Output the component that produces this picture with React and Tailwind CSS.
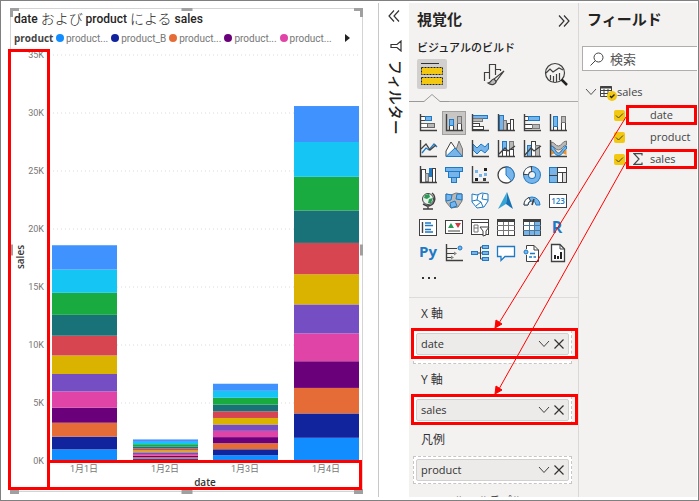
import React from "react";

const SERIES_COLORS = [
  "#118dff", "#12239e", "#e66c37", "#6b007b", "#e044a7", "#744ec2",
  "#d9b300", "#d64550", "#197278", "#1aab40", "#15c6f4", "#4092ff",
];

// Sales per product, in thousands: first product and the step to each next one.
const DAYS = [
  { label: "1月1日", first: 1.0, step: 0.1 },
  { label: "1月2日", first: 0.1, step: 0.01 },
  { label: "1月3日", first: 0.5, step: 0.01 },
  { label: "1月4日", first: 2.0, step: 0.1 },
];

const LEGEND = [
  { name: "product...", color: "#118dff" },
  { name: "product_B", color: "#12239e" },
  { name: "product...", color: "#e66c37" },
  { name: "product...", color: "#6b007b" },
  { name: "product...", color: "#e044a7" },
];

const UI = "font-['Open_Sans','Noto_Sans_CJK_JP',sans-serif]";
const CHART = "font-['Roboto','Noto_Sans_CJK_JP',sans-serif]";
const JP = "font-['Noto_Sans_CJK_JP',sans-serif]";

const D = "#404040";
const B = "#1e7ac4";
const L = "#76b4ea";
const G = "#b8b8b8";

const Axis = () => <path d="M1.5 0V16.5H18" fill="none" stroke={D} strokeWidth="1.4" />;

function Box({ x, y, w, h, f = "#fff", s = D }) {
  return <rect x={x} y={y} width={w} height={h} fill={f} stroke={s} />;
}

const VISUALS = [
  ["積み上げ横棒グラフ", <><Box x={1.5} y={9.5} w={14} h={4} f={G} s="#666" /><Box x={1.5} y={9.5} w={7} h={4} f="#fff" s="#666" /><Box x={1.5} y={2.5} w={5} h={4} /><Box x={6.5} y={2.5} w={6} h={4} f={L} s={B} /><Axis /></>],
  ["積み上げ縦棒グラフ", <><Box x={4.5} y={11.5} w={4} h={5} /><Box x={4.5} y={5.5} w={4} h={6} f={L} s={B} /><Box x={12.5} y={9.5} w={4} h={7} /><Box x={12.5} y={2.5} w={4} h={7} f={G} s="#777" /><Axis /></>],
  ["集合横棒グラフ", <><Box x={1.5} y={1.5} w={15} h={3} f={L} s={B} /><Box x={1.5} y={4.5} w={10} h={3} f={G} s="#777" /><Box x={1.5} y={9.5} w={7} h={3} /><Box x={1.5} y={12.5} w={11} h={3} /><Axis /></>],
  ["集合縦棒グラフ", <><Box x={2.5} y={1.5} w={4} h={15} f={L} s={B} /><Box x={6.5} y={6.5} w={3} h={10} f={G} s="#777" /><Box x={10.5} y={9.5} w={3} h={7} /><Box x={13.5} y={5.5} w={3} h={11} /><Axis /></>],
  ["100% 積み上げ横棒グラフ", <><Box x={1.5} y={2.5} w={4} h={4} /><Box x={5.5} y={2.5} w={11} h={4} f={L} s={B} /><Box x={1.5} y={10.5} w={8} h={4} /><Box x={9.5} y={10.5} w={7} h={4} f={G} s="#777" /><Axis /></>],
  ["100% 積み上げ縦棒グラフ", <><Box x={4.5} y={12.5} w={4} h={4} /><Box x={4.5} y={2.5} w={4} h={10} f={L} s={B} /><Box x={12.5} y={8.5} w={4} h={8} /><Box x={12.5} y={2.5} w={4} h={6} f={G} s="#777" /><Axis /></>],

  ["折れ線グラフ", <><path d="M3 13L7 8L10 10L15 4L18 7" fill="none" stroke={B} strokeWidth="1.3" /><path d="M2 9L7 4L11 10L17 5" fill="none" stroke={D} strokeWidth="1.3" /><Axis /></>],
  ["面グラフ", <><path d="M9 16L14 1L17.5 9V16.5Z" fill={G} stroke="#777" /><path d="M1 11L6 2L13 12L9 16.5H1Z" fill="#fff" stroke={D} /><path d="M1 16.5L10 8L17.5 16.5Z" fill={L} stroke={B} /></>],
  ["積み上げ面グラフ", <><path d="M2 4L6 8L10 4L14 7L17.5 3V9L14 13L10 10L6 14L2 10Z" fill={L} stroke={B} /><Axis /></>],
  ["折れ線グラフおよび積み上げ縦棒グラフ", <><Box x={5.5} y={1.5} w={4} h={10} f={L} s={B} /><Box x={5.5} y={10.5} w={4} h={6} /><Box x={12.5} y={1.5} w={4} h={9} f={G} s="#777" /><Box x={12.5} y={9.5} w={4} h={7} /><path d="M2 14L8 8L11 11L18 6" fill="none" stroke={D} strokeWidth="1.3" /><Axis /></>],
  ["折れ線グラフおよび集合縦棒グラフ", <><Box x={4.5} y={5.5} w={4} h={11} f={L} s={B} /><Box x={8.5} y={1.5} w={4} h={15} /><Box x={12.5} y={5.5} w={4} h={11} f={G} s="#777" /><path d="M2 15L8 8L11 11L18 6" fill="none" stroke={D} strokeWidth="1.3" /><Axis /></>],
  ["リボン グラフ", <><path d="M2 10L6 9L9.500 13L13 9L17.500 10V15L13 13L9.500 16L6 13L2 15Z" fill="#f0922b" /><path d="M2 2C6 2 6 6 9.500 6S13 1 17.500 1V5C14 5 13 10 9.500 10S6 6 2 6Z" fill={G} stroke="#777" /><path d="M2 6C6 6 6 13 9.500 13S13 7 17.500 6V9C14 10 14 15.500 9.500 15.500S5 10 2 9.500Z" fill={L} stroke={B} /><Axis /></>],

  ["ウォーターフォール図", <><Box x={2.5} y={3.5} w={4} h={13} /><Box x={6.5} y={7.5} w={3} h={8} f={G} s="#777" /><Box x={10.5} y={2.5} w={2} h={8} f={B} s={B} /><Box x={13.5} y={2.5} w={3} h={14} f="#fff" /><Axis /></>],
  ["じょうごグラフ", <><Box x={0.5} y={1.5} w={17} h={4} f={L} s={B} /><Box x={3.5} y={5.5} w={11} h={6} f={L} s={B} /><Box x={6.5} y={11.5} w={5} h={5} f={L} s={B} /></>],
  ["散布図", <><rect x="4" y="4" width="3" height="3" fill={L} /><rect x="8" y="8" width="3" height="3" fill={L} /><rect x="13" y="7" width="3" height="3" fill={L} /><rect x="13" y="2" width="3" height="3" fill="#222" /><rect x="4" y="12" width="3" height="3" fill="#222" /><rect x="12" y="12" width="3" height="3" fill={D} /><Axis /></>],
  ["円グラフ", <><circle cx="9" cy="9" r="8" fill="#fff" stroke={D} strokeWidth="1.3" /><path d="M9 1A8 8 0 0 1 14.500 15L9 9Z" fill={L} stroke={B} /></>],
  ["ドーナツ グラフ", <><circle cx="9" cy="9" r="6" fill="none" stroke={B} strokeWidth="6" /><circle cx="9" cy="9" r="6" fill="none" stroke={L} strokeWidth="4" /><path d="M3 9A6 6 0 0 1 9 3" fill="none" stroke={D} strokeWidth="6" /><path d="M3 8A6 6 0 0 1 8 3" fill="none" stroke="#fff" strokeWidth="4" /></>],
  ["ツリーマップ", <><Box x={0.5} y={1.5} w={8} h={15} f={L} s={B} /><Box x={8.5} y={1.5} w={9} h={5} /><Box x={8.5} y={6.5} w={5} h={10} /><Box x={13.5} y={6.5} w={4} h={10} f="#ddd" /><path d="M0 9.500H8M8.500 1V17" stroke={D} /></>],

  ["マップ", <><circle cx="9" cy="7" r="5.500" fill="#e8f4ec" stroke={D} /><path d="M6 3L10 2L11 5L8 7L5 6ZM10 7L14 6L12 11L9 11Z" fill="#2b9a55" /><path d="M13 1C18 5 16 14 8 14L4 12M9 14V17M4 17H14" fill="none" stroke={D} strokeWidth="1.400" /></>],
  ["塗り分け地図", <><path d="M1 2L6 3L11 1L17 2V9L13 15L6 16L1 10Z" fill={G} stroke="#777" /><path d="M1 2L7 3L6 8L1 9ZM12 2L17 2V8L11 7ZM5 11L10 9L12 14L6 16Z" fill={L} stroke={B} /></>],
  ["図形マップ", <><path d="M1 2L6 3L11 1L17 2V9L13 15L6 16L1 10Z" fill="#fff" stroke={B} /><path d="M7 3L6 8L1 9M12 2L11 7L17 8M6 8L10 10L12 15M10 10L5 14" fill="none" stroke={B} /></>],
  ["Azure マップ", <><path d="M10 0L16 17L9 12Z" fill="#1471b5" /><path d="M10 0L1 17L9 12Z" fill="#35a5d5" /></>],
  ["ゲージ", <><path d="M1 13A8 8 0 0 1 17 13H13A4 4 0 0 0 5 13Z" fill={L} stroke={B} /><path d="M1 13A8 8 0 0 1 6 5.500L7.500 9A4 4 0 0 0 5 13Z" fill="#fff" stroke={D} /><path d="M9 13L11 7" stroke={D} strokeWidth="1.600" /></>],
  ["カード", <><Box x={0.5} y={2.5} w={17} h={13} /><text x="9" y="12" textAnchor="middle" fontSize="8" fontWeight="600" fill={B}>123</text></>],

  ["複数の行カード", <><Box x={0.5} y={1.5} w={17} h={16} /><path d="M3.500 4V15" stroke={D} strokeWidth="1.400" /><path d="M6 5H12M6 7.500H14M6 11.500H12M6 14H14" stroke={B} strokeWidth="1.400" /></>],
  ["KPI", <><Box x={0.5} y={2.5} w={17} h={13} /><path d="M3 10L6 5L9 10Z" fill="#2b9a55" /><path d="M10 5H16L13 10Z" fill="#d8373f" /><path d="M3 13H15" stroke={D} /></>],
  ["スライサー", <><Box x={0.5} y={1.5} w={17} h={15} /><path d="M0 4.500H18" stroke={D} /><path d="M3 7H7V14H3ZM3 10H7" fill="none" stroke="#777" /><path d="M9 9H18L15 13V17L12 18V13Z" fill="#fff" stroke={D} /></>],
  ["テーブル", <><Box x={0.5} y={1.5} w={17} h={16} /><path d="M1 3H17" stroke={D} strokeWidth="2" /><path d="M0 7.500H18M0 12.500H18M6.500 4V17M11.500 4V17" stroke="#777" /></>],
  ["マトリックス", <><Box x={0.5} y={1.5} w={17} h={16} /><path d="M12 4H17V17H1V13H12Z" fill={L} /><path d="M0 7.500H18M0 12.500H18M6.500 4V17M11.500 4V17" stroke="#4f7799" /><path d="M1 3H17" stroke={D} strokeWidth="2" /></>],
  ["R スクリプト ビジュアル", <text x="8" y="15" textAnchor="middle" fontSize="16" fontWeight="700" fill={B}>R</text>],

  ["Python ビジュアル", <text x="9" y="13" textAnchor="middle" fontSize="15" fontWeight="700" fill={B}>Py</text>],
  ["主要なインフルエンサー", <><path d="M2 4.500H12M2 9.500H9M2 13.500H6" stroke={D} /><circle cx="15" cy="4" r="2" fill={L} stroke={B} /><path d="M9 7.500L12 9.500L9 11.500ZM6 11.500L9 13.500L6 15.500Z" fill="#888" /><Axis /></>],
  ["分解ツリー", <><Box x={0.5} y={7.5} w={6} h={3} f={L} s={B} /><path d="M7 9H11M9.500 3V15H12M9.500 3H12" fill="none" stroke={D} /><Box x={11.5} y={1.5} w={6} h={3} f={L} s={B} /><Box x={11.5} y={7.5} w={6} h={3} f={L} s={B} /><Box x={11.5} y={13.5} w={6} h={3} f={L} s={B} /></>],
  ["Q&A", <path d="M0.500 2.500H17.500V12.500H8L4 16.500V12.500H0.500Z" fill="#fff" stroke={B} strokeWidth="1.300" />],
  ["スマート説明", <><path d="M3.500 5V1.500H11L15.500 6V17.500H3.500V11" fill="#fff" stroke={D} /><path d="M11 1.500V6H15.500" fill="none" stroke={D} /><circle cx="3" cy="8" r="2" fill={L} stroke={B} /><path d="M7 9.500H12M6 13H9M10.500 13H13" stroke={B} strokeWidth="1.300" /></>],
  ["ページ分割されたレポート", <><path d="M2.500 0.500H11L15.500 5V17.500H2.500Z" fill="#fff" stroke={D} strokeWidth="1.300" /><path d="M11 1V5H15" fill="none" stroke={D} /><path d="M6 15V11M9 15V12M12 15V8" stroke="#222" strokeWidth="2" /></>],
];

function Chart() {
  const zero = 414;
  const perK = 406 / 35;
  return (
    <svg viewBox="0 0 351 444" className={`block w-full ${CHART}`} role="img" aria-label="date および product による sales">
      {[35, 30, 25, 20, 15, 10, 5, 0].map((k) => {
        const y = Math.round(zero - k * perK);
        return (
          <g key={k}>
            {k > 0 && <line x1="42" x2="348" y1={y} y2={y} stroke="#dcdcdc" strokeDasharray="1 3" />}
            <text x="33" y={y + 3} textAnchor="end" fontSize="9" fill="#777">{k}K</text>
          </g>
        );
      })}
      {DAYS.map((day, i) => {
        const x = 41 + Math.round(i * 80.6);
        let total = 0;
        return (
          <g key={day.label}>
            {SERIES_COLORS.map((color, j) => {
              const v = day.first + day.step * j;
              total += v;
              return <rect key={color} x={x} y={zero - total * perK} width="65" height={v * perK} fill={color} />;
            })}
            <text x={x + 32} y="425" textAnchor="middle" fontSize="9" fill="#777">{day.label}</text>
          </g>
        );
      })}
      <g className={UI} fontSize="10" fontWeight="600" fill="#333" textAnchor="middle">
        <text x="194" y="439">date</text>
        <text transform="translate(13 210) rotate(-90)">sales</text>
      </g>
    </svg>
  );
}

const Handle = ({ className }) => <span className={`absolute bg-[#a0a0a0] ${className}`} />;

function ReportCanvas() {
  return (
    <main className="min-w-0 flex-1 border-r border-[#c8c8c8] pt-[5px] pr-[15px] pl-[9px]">
      <section className="relative border border-[#d4d4d4]">
        <Handle className="-top-px -left-px h-[3px] w-[9px]" />
        <Handle className="-top-px -left-px h-[9px] w-[3px]" />
        <Handle className="-top-px left-1/2 h-[3px] w-[11px] -translate-x-1/2" />
        <Handle className="-top-px -right-px h-[3px] w-[9px]" />
        <Handle className="-top-px -right-px h-[9px] w-[3px]" />
        <Handle className="top-1/2 -left-px h-[11px] w-[3px] -translate-y-1/2" />
        <Handle className="top-1/2 -right-px h-[11px] w-[3px] -translate-y-1/2" />
        <Handle className="-bottom-[3px] -left-px h-[5px] w-[9px]" />
        <Handle className="-bottom-[3px] left-1/2 h-[5px] w-[11px] -translate-x-1/2" />
        <Handle className="-right-px -bottom-[3px] h-[5px] w-[9px]" />
        <h1 className={`flex h-5 items-center pl-[3px] text-xs font-medium whitespace-nowrap text-[#252423] ${CHART}`}>
          date&nbsp;<span className="text-sm font-light">および</span>&nbsp;product&nbsp;<span className="text-sm font-light">による</span>&nbsp;sales
        </h1>
        <div className={`flex h-[18px] items-center pl-[3px] text-[10px] text-[#777] ${CHART}`}>
          <span className={`w-[42px] font-bold text-[#444] ${UI}`}>product</span>
          <ul className="flex flex-1 gap-[3px]">
            {LEGEND.map((item, i) => (
              <li key={i} className="flex items-center gap-[2px] whitespace-nowrap">
                <svg viewBox="0 0 8 8" className="size-2 shrink-0"><circle cx="4" cy="4" r="4" fill={item.color} /></svg>
                {item.name}
              </li>
            ))}
          </ul>
          <button type="button" aria-label="次へ" className="mr-3">
            <svg viewBox="0 0 5 8" className="h-2 w-[5px]"><path d="M0 0L5 4L0 8Z" fill="#222" /></svg>
          </button>
        </div>
        <div className="relative">
          <Chart />
          <div className="absolute top-[2px] bottom-px -left-[3px] w-[42px] border-[3px] border-[#fe0000]" />
          <div className="absolute right-0 bottom-px left-9 h-[30px] border-[3px] border-[#fe0000]" />
        </div>
      </section>
    </main>
  );
}

function Chevrons({ flip }) {
  return (
    <svg viewBox="0 0 12 12" className="size-3" fill="none" stroke="#333" strokeWidth="1.2">
      <path d={flip ? "M1 0.500L6 6L1 11.500M6 0.500L11 6L6 11.500" : "M6 0.500L1 6L6 11.500M11 0.500L6 6L11 11.500"} />
    </svg>
  );
}

function FilterPane() {
  return (
    <aside className="w-[30px] shrink-0 bg-white pt-[7px] pl-[9px]">
      <button type="button" aria-label="展開" className="block"><Chevrons /></button>
      <div className="pt-[18px] pl-[2px]">
        <svg viewBox="0 0 12 12" className="size-3" fill="none" stroke="#333" strokeWidth="1.2">
          <path d="M11 1V11L7 7.500H1V4.500H7Z" />
        </svg>
        <h2 className={`mt-2 text-[15px] leading-3 font-medium text-[#222] [text-orientation:sideways] [writing-mode:vertical-rl] ${JP}`}>フィルター</h2>
      </div>
    </aside>
  );
}

function Well({ title, field, marked, tall }) {
  return (
    <section>
      <h3 className={`flex h-8 items-center pl-3 text-xs text-[#333] ${UI}`}>{title}</h3>
      <div className="relative pr-[6px] pl-1">
        <div className={`border border-dashed border-[#c8c6c4] bg-white px-[2px] pt-[2px] ${tall ? "pb-2" : "pb-[2px]"}`}>
          <div className={`flex h-[22px] items-center rounded-[2px] border border-[#d2d0ce] bg-[#edebe9] pr-1 pl-1 text-[11px] text-[#333] ${UI}`}>
            <span className="flex-1">{field}</span>
            <button type="button" aria-label="オプション" className="mr-1">
              <svg viewBox="0 0 12 8" className="h-2 w-3" fill="none" stroke="#444"><path d="M1 1L6 6.500L11 1" /></svg>
            </button>
            <button type="button" aria-label="削除">
              <svg viewBox="0 0 10 10" className="size-[10px]" fill="none" stroke="#333" strokeWidth="1.2"><path d="M0.500 0.500L9.500 9.500M9.500 0.500L0.500 9.500" /></svg>
            </button>
          </div>
        </div>
        {marked && <div className="absolute -top-[2px] right-0 left-[2px] h-[31px] border-[3px] border-[#fe0000]" />}
      </div>
    </section>
  );
}

function VisualizationPane() {
  return (
    <aside className="w-[170px] shrink-0 border-r border-[#dad8d6] bg-[#f3f2f1]">
      <header className="flex h-8 items-center justify-between pr-2 pl-2">
        <h2 className={`text-[15px] font-bold text-[#252423] ${JP}`}>視覚化</h2>
        <button type="button" aria-label="折りたたむ" className="pt-1"><Chevrons flip /></button>
      </header>
      <h3 className={`flex h-6 items-center pl-2 text-[11px] font-medium text-[#222] ${JP}`}>ビジュアルのビルド</h3>
      <nav className="flex justify-between pr-[7px] pl-2">
        <button type="button" aria-label="ビルド" className="grid size-[30px] place-items-center rounded-[2px] bg-[#d2d0ce]">
          <svg viewBox="0 0 24 24" className="size-6">
            <path d="M1 1.500H19" stroke="#333" />
            <path d="M1.500 5.500H22.500V12.500H1.500ZM1.500 15.500H22.500V22.500H1.500Z" fill="#f2c811" stroke="#222" strokeDasharray="2 1" />
          </svg>
        </button>
        <button type="button" aria-label="書式" className="grid size-[30px] place-items-center">
          <svg viewBox="0 0 22 24" className="h-6 w-[22px]" fill="none" stroke="#404040" strokeWidth="1.2">
            <path d="M1.500 19V10.500H6.500M6.500 17V2.500H12.500V13M12.500 7.500H17.500V9" />
            <path d="M21 9L11 17L13 19.500L21 9Z" fill="#f3f2f1" />
            <path d="M11 17C8 17 9 20 5 21C9 24 13 22 13 19.500Z" fill="#bbb" />
          </svg>
        </button>
        <button type="button" aria-label="分析" className="grid size-[30px] place-items-center">
          <svg viewBox="0 0 24 24" className="size-6" fill="none" stroke="#404040" strokeWidth="1.2">
            <circle cx="11" cy="11" r="9.500" />
            <path d="M2 11L6 7L9 10L15 6L19 8M6.500 18V13M9.500 20V14M12.500 20V12M15.500 18V11" />
            <path d="M17.500 17.500L23 23" strokeWidth="2.5" stroke="#222" />
          </svg>
        </button>
      </nav>
      <div className="flex h-[13px] items-end">
        <svg viewBox="0 0 40 8" className="h-2 w-10 shrink-0" fill="none" stroke="#999"><path d="M0 7.500H15L23 0.500L31 7.500H40" /></svg>
        <span className="h-px flex-1 bg-[#aaa]" />
      </div>
      <div className="grid w-max grid-cols-[repeat(6,26px)] pt-2 pl-[6px]">
        {VISUALS.map(([name, drawing], i) => (
          <div key={name} className="grid h-[26px] place-items-center">
            <button type="button" aria-label={name} className={i === 1 ? "grid size-6 place-items-center border border-[#a19f9d] bg-[#c8c6c4]" : "grid size-6 place-items-center"}>
              <svg viewBox="0 0 18 18" className={`size-[18px] overflow-visible ${UI}`}>{drawing}</svg>
            </button>
          </div>
        ))}
      </div>
      <div className="h-8 border-b border-[#dedcda] pt-[10px] pl-3">
        <button type="button" aria-label="その他" className="block">
          <svg viewBox="0 0 16 4" className="h-1 w-4" fill="#333"><path d="M1 1H3V3H1ZM7 1H9V3H7ZM13 1H15V3H13Z" /></svg>
        </button>
      </div>
      <Well title="X 軸" field="date" marked tall />
      <Well title="Y 軸" field="sales" marked />
      <Well title="凡例" field="product" />
      <h3 className={`flex h-8 items-center pl-3 text-[11px] whitespace-nowrap text-[#333] ${JP}`}>スモール マルチプル</h3>
    </aside>
  );
}

function FieldRow({ name, sum, marked }) {
  return (
    <li className="relative">
      <label className={`flex h-[22px] items-center pl-[35px] text-[11px] text-[#444] ${UI}`}>
        <span className="grid size-[11px] place-items-center">
          <input type="checkbox" defaultChecked className="col-start-1 row-start-1 size-[11px] appearance-none rounded-[2px] bg-[#f2c811]" />
          <svg viewBox="0 0 11 11" className="pointer-events-none col-start-1 row-start-1 size-[11px]" fill="none" stroke="#444"><path d="M2 5.500L4.500 8L9 3.500" /></svg>
        </span>
        <span className="flex w-[25px] justify-center">
          {sum && <svg viewBox="0 0 10 12" className="h-3 w-[10px]" fill="none" stroke="#444" strokeWidth="1.2"><path d="M9 2.500V0.600H1L6 6L1 11.400H9V9.500" /></svg>}
        </span>
        {name}
      </label>
      {marked && <div className="absolute inset-y-px right-0 left-[47px] border-[3px] border-[#fe0000]" />}
    </li>
  );
}

function FieldsPane() {
  return (
    <aside className="w-[118px] shrink-0 bg-[#f3f2f1]">
      <h2 className={`flex h-8 items-center pl-2 text-[15px] font-bold text-[#252423] ${JP}`}>フィールド</h2>
      <label className="mt-[11px] ml-[3px] flex h-[25px] items-center gap-[6px] border border-r-0 border-[#b0aeac] bg-white pl-[7px]">
        <svg viewBox="0 0 14 14" className="size-[14px] shrink-0" fill="none" stroke="#444"><circle cx="8.500" cy="5.500" r="4.500" /><path d="M5.500 8.500L0.500 13.500" /></svg>
        <input type="text" placeholder="検索" aria-label="検索" className={`w-full min-w-0 bg-transparent text-[13px] outline-none placeholder:text-[#555] ${JP}`} />
      </label>
      <div className={`mt-[9px] flex h-6 items-center pl-[6px] text-[11px] text-[#444] ${UI}`}>
        <svg viewBox="0 0 12 8" className="h-2 w-3" fill="none" stroke="#555"><path d="M1 1L6 6.500L11 1" /></svg>
        <svg viewBox="0 0 18 18" className="ml-[2px] h-[18px] w-[18px]">
          <path d="M1.500 3.500H12.500V13.500H1.500ZM1.500 7.500H12.500M1.500 10.500H12.500M5 6V13.500M9 6V13.500" fill="#fff" stroke="#404040" />
          <path d="M1 4.500H13" stroke="#404040" strokeWidth="2" />
          <circle cx="13" cy="13" r="5" fill="#f2c811" />
          <path d="M11 13L12.500 14.500L15.500 11.500" fill="none" stroke="#222" strokeWidth="1.300" />
        </svg>
        <span>sales</span>
      </div>
      <ul>
        <FieldRow name="date" marked />
        <FieldRow name="product" />
        <FieldRow name="sales" sum marked />
      </ul>
    </aside>
  );
}

function Arrows() {
  return (
    <svg viewBox="0 0 150 300" className="pointer-events-none absolute top-[105px] right-[60px] h-[300px] w-[150px]" stroke="#fe0000">
      <path d="M138 11L11 217M138 56L11 283" fill="none" />
      <path d="M7 222L8 214L14 218ZM7 288L8 280L14 284Z" fill="#fe0000" />
    </svg>
  );
}

export default function App() {
  return (
    <div className="relative flex h-screen overflow-hidden border border-[#808080] bg-white pt-[2px] pr-px pb-[3px]">
      <div className="flex min-w-0 flex-1 overflow-hidden">
        <ReportCanvas />
        <FilterPane />
        <VisualizationPane />
        <FieldsPane />
      </div>
      <Arrows />
    </div>
  );
}
